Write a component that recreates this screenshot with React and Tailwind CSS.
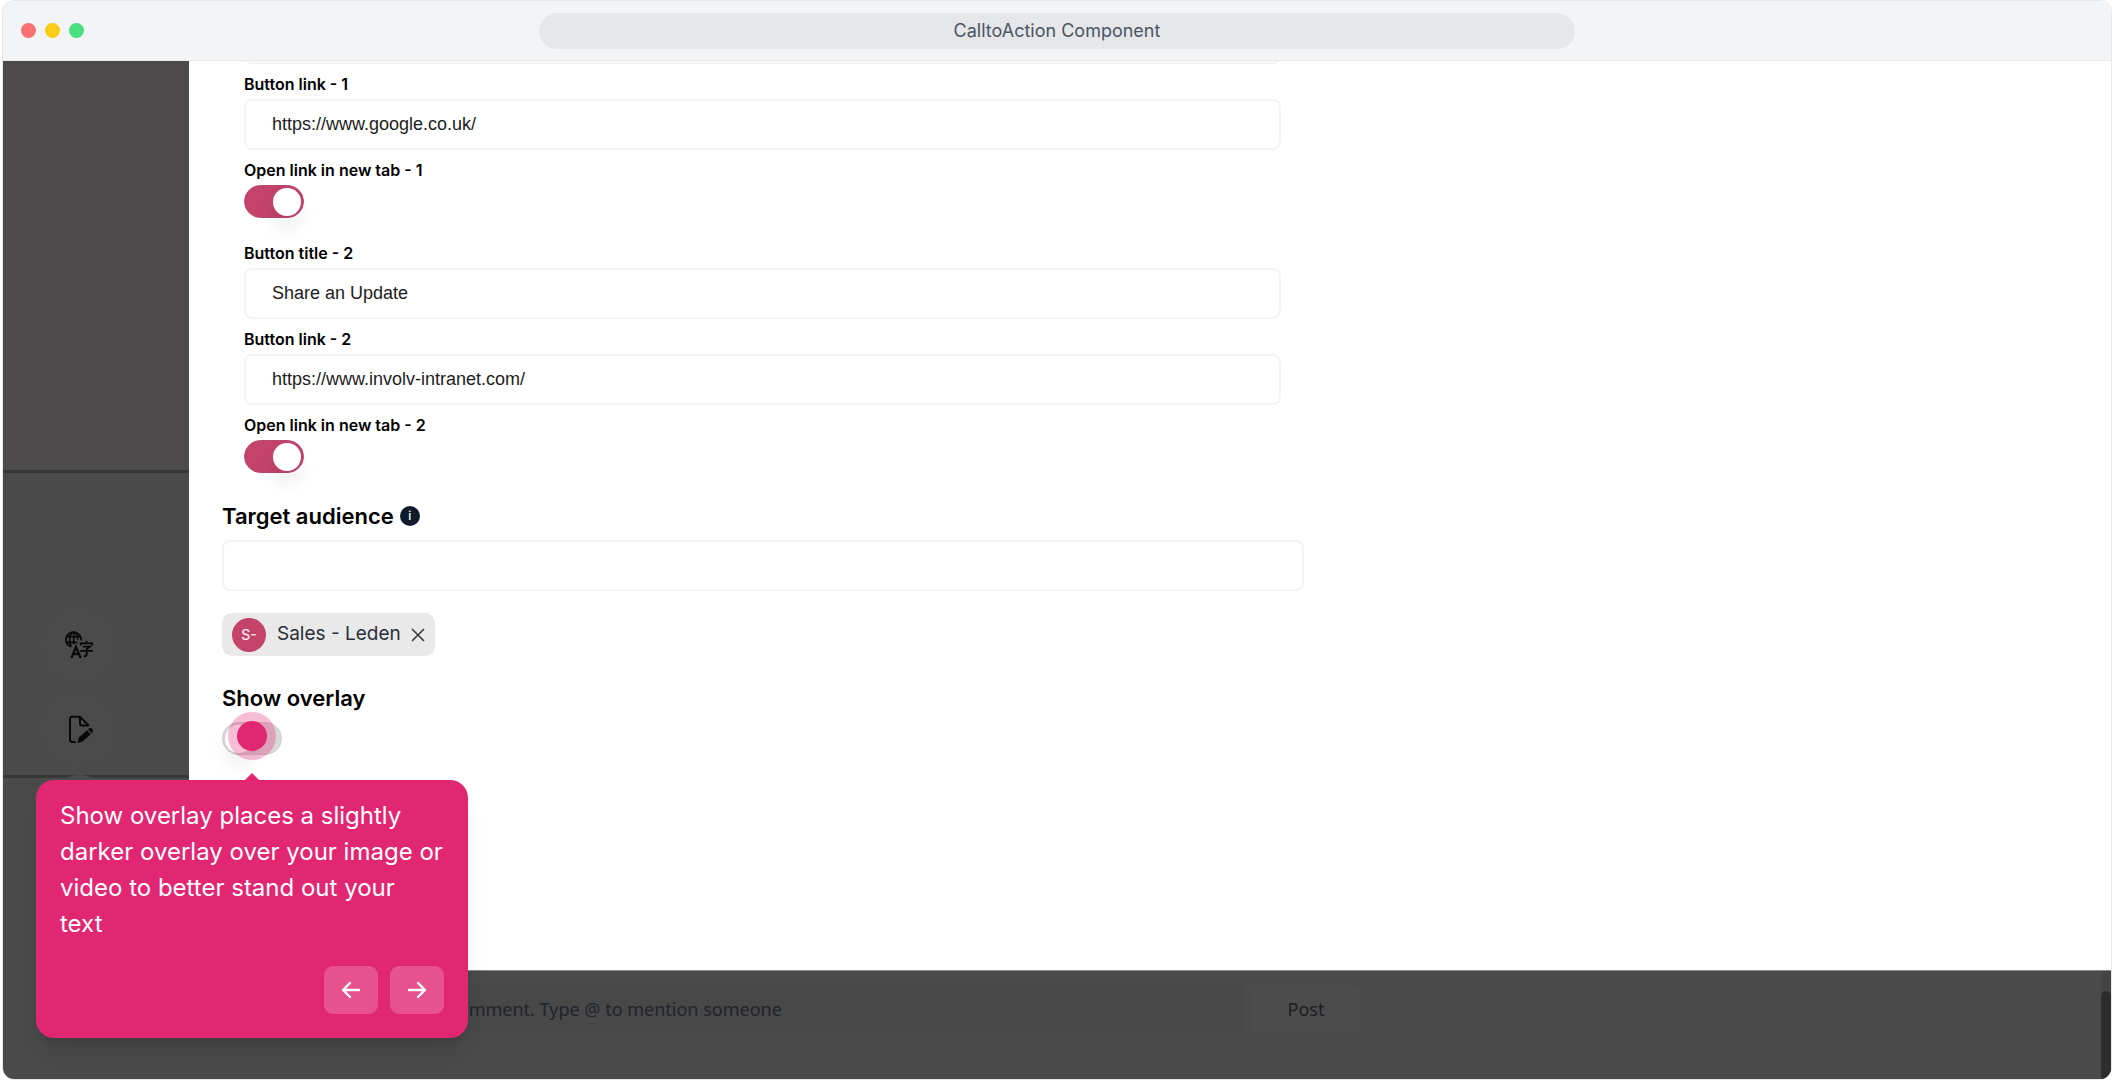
import React, { useState } from "react";

const inputClass =
  "block w-full h-[51px] px-[26px] border-2 border-[#f4f4f4] rounded-lg bg-white text-[#1c1c1c] text-lg font-['Liberation_Sans',sans-serif] outline-none";

const labelClass = "block mb-[3px] text-base leading-6 font-semibold text-black";

function Field({ id, label, value, onChange }) {
  return (
    <div>
      <label htmlFor={id} className={labelClass}>
        {label}
      </label>
      <input id={id} type="text" value={value} onChange={onChange} className={inputClass} />
    </div>
  );
}

function Toggle({ id, checked, onChange }) {
  return (
    <input
      id={id}
      type="checkbox"
      role="switch"
      checked={checked}
      onChange={onChange}
      className="flex items-center appearance-none w-[60px] h-[33px] p-0.5 rounded-full border border-[#cfcfcf] bg-[#d9d9d9] checked:border-[#b5476b] checked:bg-[#c4436b] before:content-[''] before:size-7 before:rounded-full before:bg-white before:shadow-[0_12px_20px_rgba(0,0,0,0.08)] checked:before:ml-[26px]"
    />
  );
}

function ToggleField({ id, label, checked, onChange }) {
  return (
    <div>
      <label htmlFor={id} className={labelClass}>
        {label}
      </label>
      <Toggle id={id} checked={checked} onChange={onChange} />
    </div>
  );
}

function TranslateIcon() {
  return (
    <svg viewBox="0 0 28 28" className="size-7" fill="none" stroke="#080808" strokeWidth="1.8">
      <path d="M5.600 15.700A7.600 7.600 0 1 1 16.200 9.400" />
      <path d="M6.400 15.600C5 13.600 4.700 11 4.700 8.700C4.700 5 6.400 1.300 8.700 1.300S12.700 5 12.700 8.700M8.700 1.200V13M2 5.600H15.400M1.400 11.400H12.400" strokeWidth="1.6" />
      <path d="M6.400 27L11 15.800L15.600 27M8 23.200H14" strokeWidth="2.2" />
      <path d="M15.600 14.600V12.400H27.200V14.600M21.400 9.800V12.400M17.800 15.600H24.800L21.600 18.200V24.200Q21.600 25.400 18.800 25M14.800 19.800H28" />
    </svg>
  );
}

function EditPageIcon() {
  return (
    <svg viewBox="0 0 28 28" className="size-7" fill="none" stroke="#080808" strokeWidth="2">
      <path d="M10 27H7.400Q5 27 5 24.600V4.200Q5 1.800 7.400 1.800H15L23.600 10.400" strokeLinecap="round" />
      <path d="M15 2V8.400Q15 10.400 17 10.400H23" />
      <path d="M12.600 28L13.800 22.600L22 15.200L25.800 19.200L17.600 26.600ZM23 14.400L23.800 13.600Q25.400 12.400 27 13.800T27.600 17.200L26.800 18.200Z" fill="#080808" stroke="none" />
    </svg>
  );
}

function CommentsIcon() {
  return (
    <svg viewBox="0 0 28 28" className="size-7" fill="none" stroke="#080808" strokeWidth="2">
      <path d="M3 4H25V20H12L7 25V20H3Z" />
    </svg>
  );
}

function Sidebar() {
  const buttonClass = "size-[76px] rounded-full bg-[#4b4b4b] flex items-center justify-center";

  return (
    <aside className="relative flex flex-col bg-[#4a4a4a]">
      <div className="h-[412px] bg-[#4c4a4a] border-b-[3px] border-[#373636]" />
      <div className="h-[305px] border-b-[3px] border-[#373737]" />
      {/* floating page actions */}
      <div className="absolute left-[38px] top-[546px] flex flex-col gap-2">
        <button aria-label="Translate" className={buttonClass}>
          <TranslateIcon />
        </button>
        <button aria-label="Edit page" className={buttonClass}>
          <EditPageIcon />
        </button>
        <button aria-label="Comments" className={buttonClass}>
          <CommentsIcon />
        </button>
      </div>
    </aside>
  );
}

function Arrow({ d }) {
  return (
    <svg viewBox="0 0 20 18" className="w-5 h-[18px]" fill="none" stroke="currentColor" strokeWidth="2.4" strokeLinecap="round" strokeLinejoin="round">
      <path d={d} />
    </svg>
  );
}

function Callout() {
  const buttonClass = "w-[54px] h-12 rounded-[9px] bg-white/20 text-white flex items-center justify-center";

  return (
    <div className="absolute z-20 -left-[186px] top-[58px] w-[432px] rounded-[18px] bg-[#e12672] px-6 pt-[18px] pb-6 shadow-xl">
      <div className="absolute -top-[5px] left-[211px] size-2.5 rotate-45 bg-[#e12672]" />
      <p className="text-2xl leading-9 text-white">
        Show overlay places a slightly darker overlay over your image or video to better stand out your text
      </p>
      <div className="mt-6 flex justify-end gap-3">
        <button aria-label="Previous" className={buttonClass}>
          <Arrow d="M18 9H2M9 2L2 9L9 16" />
        </button>
        <button aria-label="Next" className={buttonClass}>
          <Arrow d="M2 9H18M11 2L18 9L11 16" />
        </button>
      </div>
    </div>
  );
}

export default function App() {
  const [form, setForm] = useState({
    title1: "Read more",
    link1: "https://www.google.co.uk/",
    newTab1: true,
    title2: "Share an Update",
    link2: "https://www.involv-intranet.com/",
    newTab2: true,
    audience: "",
    overlay: false,
  });

  const setText = (key) => (e) => setForm({ ...form, [key]: e.target.value });
  const setChecked = (key) => (e) => setForm({ ...form, [key]: e.target.checked });

  return (
    <div className="min-h-screen flex flex-col px-0.5 bg-white font-[Inter,sans-serif]">
      <div className="flex-1 flex flex-col rounded-xl border border-[#e5e7eb] overflow-hidden">
        <header className="h-[60px] flex items-center px-[18px] bg-[#f3f4f6] border-b border-[#e5e7eb]">
          <div className="flex-1 flex gap-[9px]">
            <span className="size-[15px] rounded-full bg-[#f87171]" />
            <span className="size-[15px] rounded-full bg-[#facc15]" />
            <span className="size-[15px] rounded-full bg-[#4ade80]" />
          </div>
          <div className="w-1/2 h-9 rounded-full bg-[#e5e7eb] text-[#4b5563] text-lg flex items-center justify-center">
            CalltoAction Component
          </div>
          <div className="flex-1" />
        </header>

        <div className="flex-1 grid grid-cols-[186px_1fr]">
          <Sidebar />

          <div className="flex flex-col min-w-0">
            <main className="bg-white pl-[33px] pr-6 pb-[215px]">
              <div className="pl-[22px] max-w-[1059px]">
                {/* scrolled out, only the lower edge is left */}
                <div className="h-[3px] flex items-end overflow-hidden">
                  <input
                    type="text"
                    aria-label="Button title - 1"
                    value={form.title1}
                    onChange={setText("title1")}
                    className={inputClass}
                  />
                </div>
                <div className="mt-2 flex flex-col gap-2">
                  <Field id="link1" label="Button link - 1" value={form.link1} onChange={setText("link1")} />
                  <ToggleField id="tab1" label="Open link in new tab - 1" checked={form.newTab1} onChange={setChecked("newTab1")} />
                </div>
                <div className="mt-[23px] flex flex-col gap-2">
                  <Field id="title2" label="Button title - 2" value={form.title2} onChange={setText("title2")} />
                  <Field id="link2" label="Button link - 2" value={form.link2} onChange={setText("link2")} />
                  <ToggleField id="tab2" label="Open link in new tab - 2" checked={form.newTab2} onChange={setChecked("newTab2")} />
                </div>
              </div>

              <section className="mt-[27px] max-w-[1082px]">
                <div className="mb-2 flex items-center gap-1.5">
                  <label htmlFor="audience" className="text-[22px] leading-8 font-semibold text-black">
                    Target audience
                  </label>
                  <span className="size-5 rounded-full bg-[#0f1b2b] text-white text-xs font-medium flex items-center justify-center">
                    i
                  </span>
                </div>
                <input id="audience" type="text" value={form.audience} onChange={setText("audience")} className={inputClass} />
                <div className="mt-[22px] w-fit h-[43px] pl-2.5 pr-2 rounded-[10px] bg-[#e9e9e9] flex items-center">
                  <span className="size-[34px] rounded-full bg-[#c4436b] text-[#fbe9ef] text-sm font-medium flex items-center justify-center">
                    S-
                  </span>
                  <span className="ml-[11px] text-[19px] text-[#2b2f36]">Sales - Leden</span>
                  <button aria-label="Remove Sales - Leden" className="ml-2">
                    <svg viewBox="0 0 18 18" className="size-[18px]" stroke="#3a3a3a" strokeWidth="1.6">
                      <path d="M3 3L15 15M15 3L3 15" />
                    </svg>
                  </button>
                </div>
              </section>

              <section className="mt-[26px]">
                <label htmlFor="overlay" className="block w-fit mb-2 text-[22px] leading-8 font-semibold text-black">
                  Show overlay
                </label>
                <div className="relative w-fit">
                  <Toggle id="overlay" checked={form.overlay} onChange={setChecked("overlay")} />
                  <span className="absolute left-1.5 -top-[10px] size-12 rounded-full bg-[#e12672]/30 flex items-center justify-center">
                    <span className="size-[30px] rounded-full bg-[#e12672]" />
                  </span>
                  <Callout />
                </div>
              </section>
            </main>

            <footer className="flex-1 flex bg-[#4a4a4a] border-t border-[#8a8a8a]">
              <div className="flex-1 flex items-start gap-2 pt-[15px] pl-[207px] font-['Noto_Sans',sans-serif]">
                <input
                  type="text"
                  aria-label="Comment"
                  placeholder="Add a comment. Type @ to mention someone"
                  className="w-[847px] h-[45px] bg-[#484848] text-lg placeholder:text-[#20242b] outline-none"
                />
                <button className="w-[110px] h-[46px] rounded-sm bg-[#4c4c4c] text-lg text-[#1c1c1c]">Post</button>
              </div>
              <div className="w-2.5 pt-5 flex bg-[#444444]">
                <div className="flex-1 rounded-t-full bg-[#2d2d2d]" />
              </div>
            </footer>
          </div>
        </div>
      </div>
    </div>
  );
}
